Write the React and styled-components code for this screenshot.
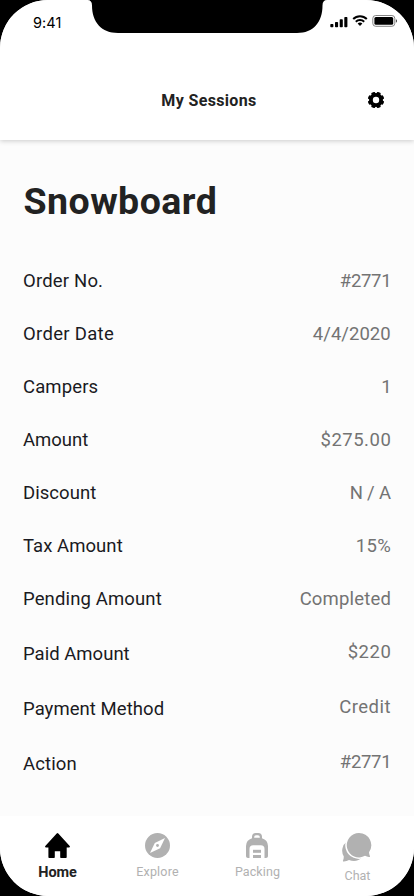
import React from 'react';
import styled, { createGlobalStyle } from 'styled-components';

const GlobalStyle = createGlobalStyle`
  *, *::before, *::after { box-sizing: border-box; }
  body { margin: 0; background: #000; }
`;

const Phone = styled.div`
  position: relative;
  display: flex;
  flex-direction: column;
  width: 414px;
  height: 896px;
  overflow: hidden;
  border-radius: 48px;
  background: #fcfcfc;
  font-family: Roboto, "Liberation Sans", sans-serif;
`;

const Notch = styled.svg`
  position: absolute;
  top: 0;
  left: 84px;
  z-index: 2;
`;

const TopArea = styled.div`
  flex: none;
  height: 140px;
  background: #fff;
  box-shadow: 0 1px 5px rgba(0, 0, 0, 0.2);
  z-index: 1;
`;

const StatusBar = styled.div`
  display: flex;
  justify-content: space-between;
  height: 61px;
  padding: 13px 16px 0 33px;
`;

const Clock = styled.span`
  font: 400 14.5px/20px Inter, sans-serif;
  letter-spacing: 0.1px;
  color: #000;
`;

const StatusIcons = styled.svg`
  display: block;
`;

const Header = styled.header`
  display: grid;
  grid-template-columns: 1fr auto 1fr;
  align-items: center;
  height: 79px;
  padding: 0 30px;
`;

const HeaderTitle = styled.h1`
  grid-column: 2;
  margin: 0 0 0 4px;
  font-size: 16px;
  line-height: 20px;
  letter-spacing: 0.35px;
  color: #222;
`;

const SettingsButton = styled.button`
  justify-self: end;
  display: flex;
  padding: 0;
  margin-bottom: 1px;
  border: 0;
  background: none;
  color: #000;
`;

const Content = styled.main`
  flex: 1;
  padding: 37px 23px 0;
`;

const Title = styled.h2`
  margin: 0 0 0 0.5px;
  font-size: 37.5px;
  line-height: 48px;
  letter-spacing: 0.45px;
  color: #222;
`;

const OrderList = styled.dl`
  margin: 44px 0 0;
`;

const OrderRow = styled.div`
  display: flex;
  justify-content: space-between;
  height: ${(p) => p.$height}px;
`;

const Label = styled.dt`
  padding-top: ${(p) => p.$drop}px;
  font-size: 18.5px;
  line-height: 24px;
  letter-spacing: ${(p) => p.$tracking}px;
  color: #1a1a22;
`;

const Value = styled.dd`
  margin: 0 ${(p) => p.$inset - p.$tracking}px 0 0;
  font-size: 18.5px;
  line-height: 24px;
  letter-spacing: ${(p) => p.$tracking}px;
  color: #737373;
`;

const TabBar = styled.nav`
  flex: none;
  display: grid;
  grid-template-columns: repeat(4, 100px);
  height: 80px;
  padding: 16px 0 0 7.5px;
  background: #fff;
`;

const Tab = styled.a`
  display: flex;
  flex-direction: column;
  align-items: center;
  color: ${(p) => (p.$active ? '#000' : '#b1b1b1')};
`;

const TabIcon = styled.svg`
  display: block;
  flex: none;
  fill: currentColor;
`;

const TabLabel = styled.span`
  margin-top: ${(p) => (p.$active ? 6 : 5)}px;
  font-size: ${(p) => (p.$active ? 14.5 : 12.5)}px;
  font-weight: ${(p) => (p.$active ? 700 : 400)};
  line-height: 16px;
  letter-spacing: ${(p) => p.$tracking}px;
  color: ${(p) => (p.$active ? '#222' : '#b1b1b1')};
`;

const rows = [
  { label: 'Order No.', lt: 0.18, value: '#2771', vt: -0.3, inset: -0.6, height: 53 },
  { label: 'Order Date', lt: 0.3, value: '4/4/2020', vt: 0.04, inset: 0.3, height: 53 },
  { label: 'Campers', lt: 0.12, value: '1', vt: 0, inset: -0.6, height: 53 },
  { label: 'Amount', lt: 0, value: '$275.00', vt: 0.5, inset: 0.2, height: 53 },
  { label: 'Discount', lt: 0.06, value: 'N / A', vt: -0.2, inset: 0, height: 53 },
  { label: 'Tax Amount', lt: 0.06, value: '15%', vt: 0.4, inset: 0.2, height: 53 },
  { label: 'Pending Amount', lt: 0.13, value: 'Completed', vt: 0.18, inset: 0.1, height: 53 },
  { label: 'Paid Amount', lt: 0.02, value: '$220', vt: 0.5, inset: 0.2, height: 55, drop: 2 },
  { label: 'Payment Method', lt: 0.06, value: 'Credit', vt: 0.5, inset: 0.4, height: 55, drop: 2 },
  { label: 'Action', lt: 0.14, value: '#2771', vt: -0.3, inset: -0.6, height: 30, drop: 2 },
];

function StatusGlyphs() {
  return (
    <StatusIcons width="68" height="16" viewBox="0 0 68 16">
      <rect x="0.3" y="11" width="3.1" height="3.2" rx="0.8" />
      <rect x="5" y="9" width="3.1" height="5.2" rx="0.8" />
      <rect x="9.7" y="6.3" width="3.1" height="7.9" rx="0.8" />
      <rect x="14.3" y="4" width="3.1" height="10.2" rx="0.8" />
      <g fill="none" stroke="#000" strokeWidth="2">
        <path d="M23.2 6a9.6 9.6 0 0 1 13.6 0" />
        <path d="M25.8 8.8a6 6 0 0 1 8.4 0" />
      </g>
      <path d="M27.6 10.6a3.5 3.5 0 0 1 4.8 0L30 13Z" />
      <rect x="42.8" y="2.5" width="22" height="10.8" rx="2.9" fill="none" stroke="#777" strokeWidth="0.9" />
      <rect x="44.4" y="4" width="18.8" height="7.8" rx="1.5" />
      <path d="M65.9 6.2v3.4c.7-.2 1.2-.9 1.2-1.7s-.5-1.5-1.2-1.7Z" fill="#555" />
    </StatusIcons>
  );
}

function GearIcon() {
  return (
    <svg width="16" height="16" viewBox="0 0 16 16">
      {[0, 45, 90, 135].map((angle) => (
        <rect
          key={angle}
          x="6"
          y="-0.2"
          width="4"
          height="16.4"
          rx="1"
          fill="currentColor"
          transform={`rotate(${angle + 22.5} 8 8)`}
        />
      ))}
      <circle cx="8" cy="8" r="7" fill="currentColor" />
      <circle cx="8" cy="8" r="3.2" fill="#fff" />
    </svg>
  );
}

function HomeIcon() {
  return (
    <TabIcon width="25" height="27" viewBox="0 0 25 27">
      <path d="M11.7 1.4a1.2 1.2 0 0 1 1.6 0L24.7 13.9c.5.7.2 1.6-.7 1.6h-2.3V25c0 .7-.4 1.1-1.1 1.1h-4.4c-.6 0-1-.4-1-1v-5.8H9.8v5.8c0 .6-.4 1-1 1H4.5c-.7 0-1.1-.4-1.1-1.1v-9.5H1c-.9 0-1.2-.9-.7-1.6Z" />
    </TabIcon>
  );
}

function CompassIcon() {
  return (
    <TabIcon width="25" height="27" viewBox="0 0 25 27">
      <circle cx="12.5" cy="13.5" r="12.5" />
      <path d="M20 6 15.1 16.2 5 21 9.8 10.9Z" fill="#fff" />
      <circle cx="12.5" cy="13.5" r="1.4" />
    </TabIcon>
  );
}

function BackpackIcon() {
  return (
    <TabIcon width="23" height="27" viewBox="0 0 23 27">
      <path
        fillRule="evenodd"
        d="M6 6.2V4.8A3.8 3.8 0 0 1 9.8 1h2.4A3.8 3.8 0 0 1 16 4.8v1.4A8.4 8.4 0 0 1 22 14v10c0 1.3-.8 2-2 2h-1.5V17a3.7 3.7 0 0 0-3.7-3.7H7.2A3.7 3.7 0 0 0 3.5 17v9H2c-1.2 0-2-.7-2-2V14A8.4 8.4 0 0 1 6 6.2ZM8.2 5.8h5.6V5a1.8 1.8 0 0 0-1.8-1.8h-2A1.8 1.8 0 0 0 8.2 5Z"
      />
      <rect x="7" y="17.8" width="8" height="3" />
      <rect x="7" y="23" width="8" height="3" />
    </TabIcon>
  );
}

function ChatIcon() {
  return (
    <TabIcon width="31" height="31" viewBox="0 0 31 31">
      <path d="M5 9.5A11.3 11.3 0 0 0 1.800 24.600c0 1.600-.3 2.800-.8 3.900-.3.800.1 1.200.9 1 1.900-.3 3.600-.7 5.100-1.500A12.500 12.500 0 0 0 20.500 25Z" />
      <path
        d="M17 1A12.200 12.200 0 1 0 23 23.800c1.300.500 2.600.900 4 1.200.800.200 1.200-.3.900-1-.5-1.200-.8-2.400-.9-3.800A12.200 12.200 0 0 0 17 1Z"
        stroke="#fff"
        strokeWidth="3"
        paintOrder="stroke"
      />
    </TabIcon>
  );
}

const tabs = [
  { label: 'Home', Icon: HomeIcon, active: true, tracking: -0.1 },
  { label: 'Explore', Icon: CompassIcon, tracking: 0.2 },
  { label: 'Packing', Icon: BackpackIcon, tracking: 0.1 },
  { label: 'Chat', Icon: ChatIcon, tracking: 0 },
];

export default function App() {
  return (
    <>
      <GlobalStyle />
      <Phone>
        <Notch width="250" height="34" viewBox="0 0 250 34">
          <path d="M0 0h3.5Q8 0 8 5.5C8 22 17.5 33 34 33H213C229.5 33 238.5 22 238.5 5.5Q238.5 0 243 0H250Z" />
        </Notch>
        <TopArea>
          <StatusBar>
            <Clock>9:41</Clock>
            <StatusGlyphs />
          </StatusBar>
          <Header>
            <HeaderTitle>My Sessions</HeaderTitle>
            <SettingsButton aria-label="Settings">
              <GearIcon />
            </SettingsButton>
          </Header>
        </TopArea>
        <Content>
          <Title>Snowboard</Title>
          <OrderList>
            {rows.map((row) => (
              <OrderRow key={row.label} $height={row.height}>
                <Label $tracking={row.lt} $drop={row.drop || 0}>{row.label}</Label>
                <Value $tracking={row.vt} $inset={row.inset}>{row.value}</Value>
              </OrderRow>
            ))}
          </OrderList>
        </Content>
        <TabBar>
          {tabs.map(({ label, Icon, active, tracking }) => (
            <Tab key={label} $active={active}>
              <Icon />
              <TabLabel $active={active} $tracking={tracking}>{label}</TabLabel>
            </Tab>
          ))}
        </TabBar>
      </Phone>
    </>
  );
}
